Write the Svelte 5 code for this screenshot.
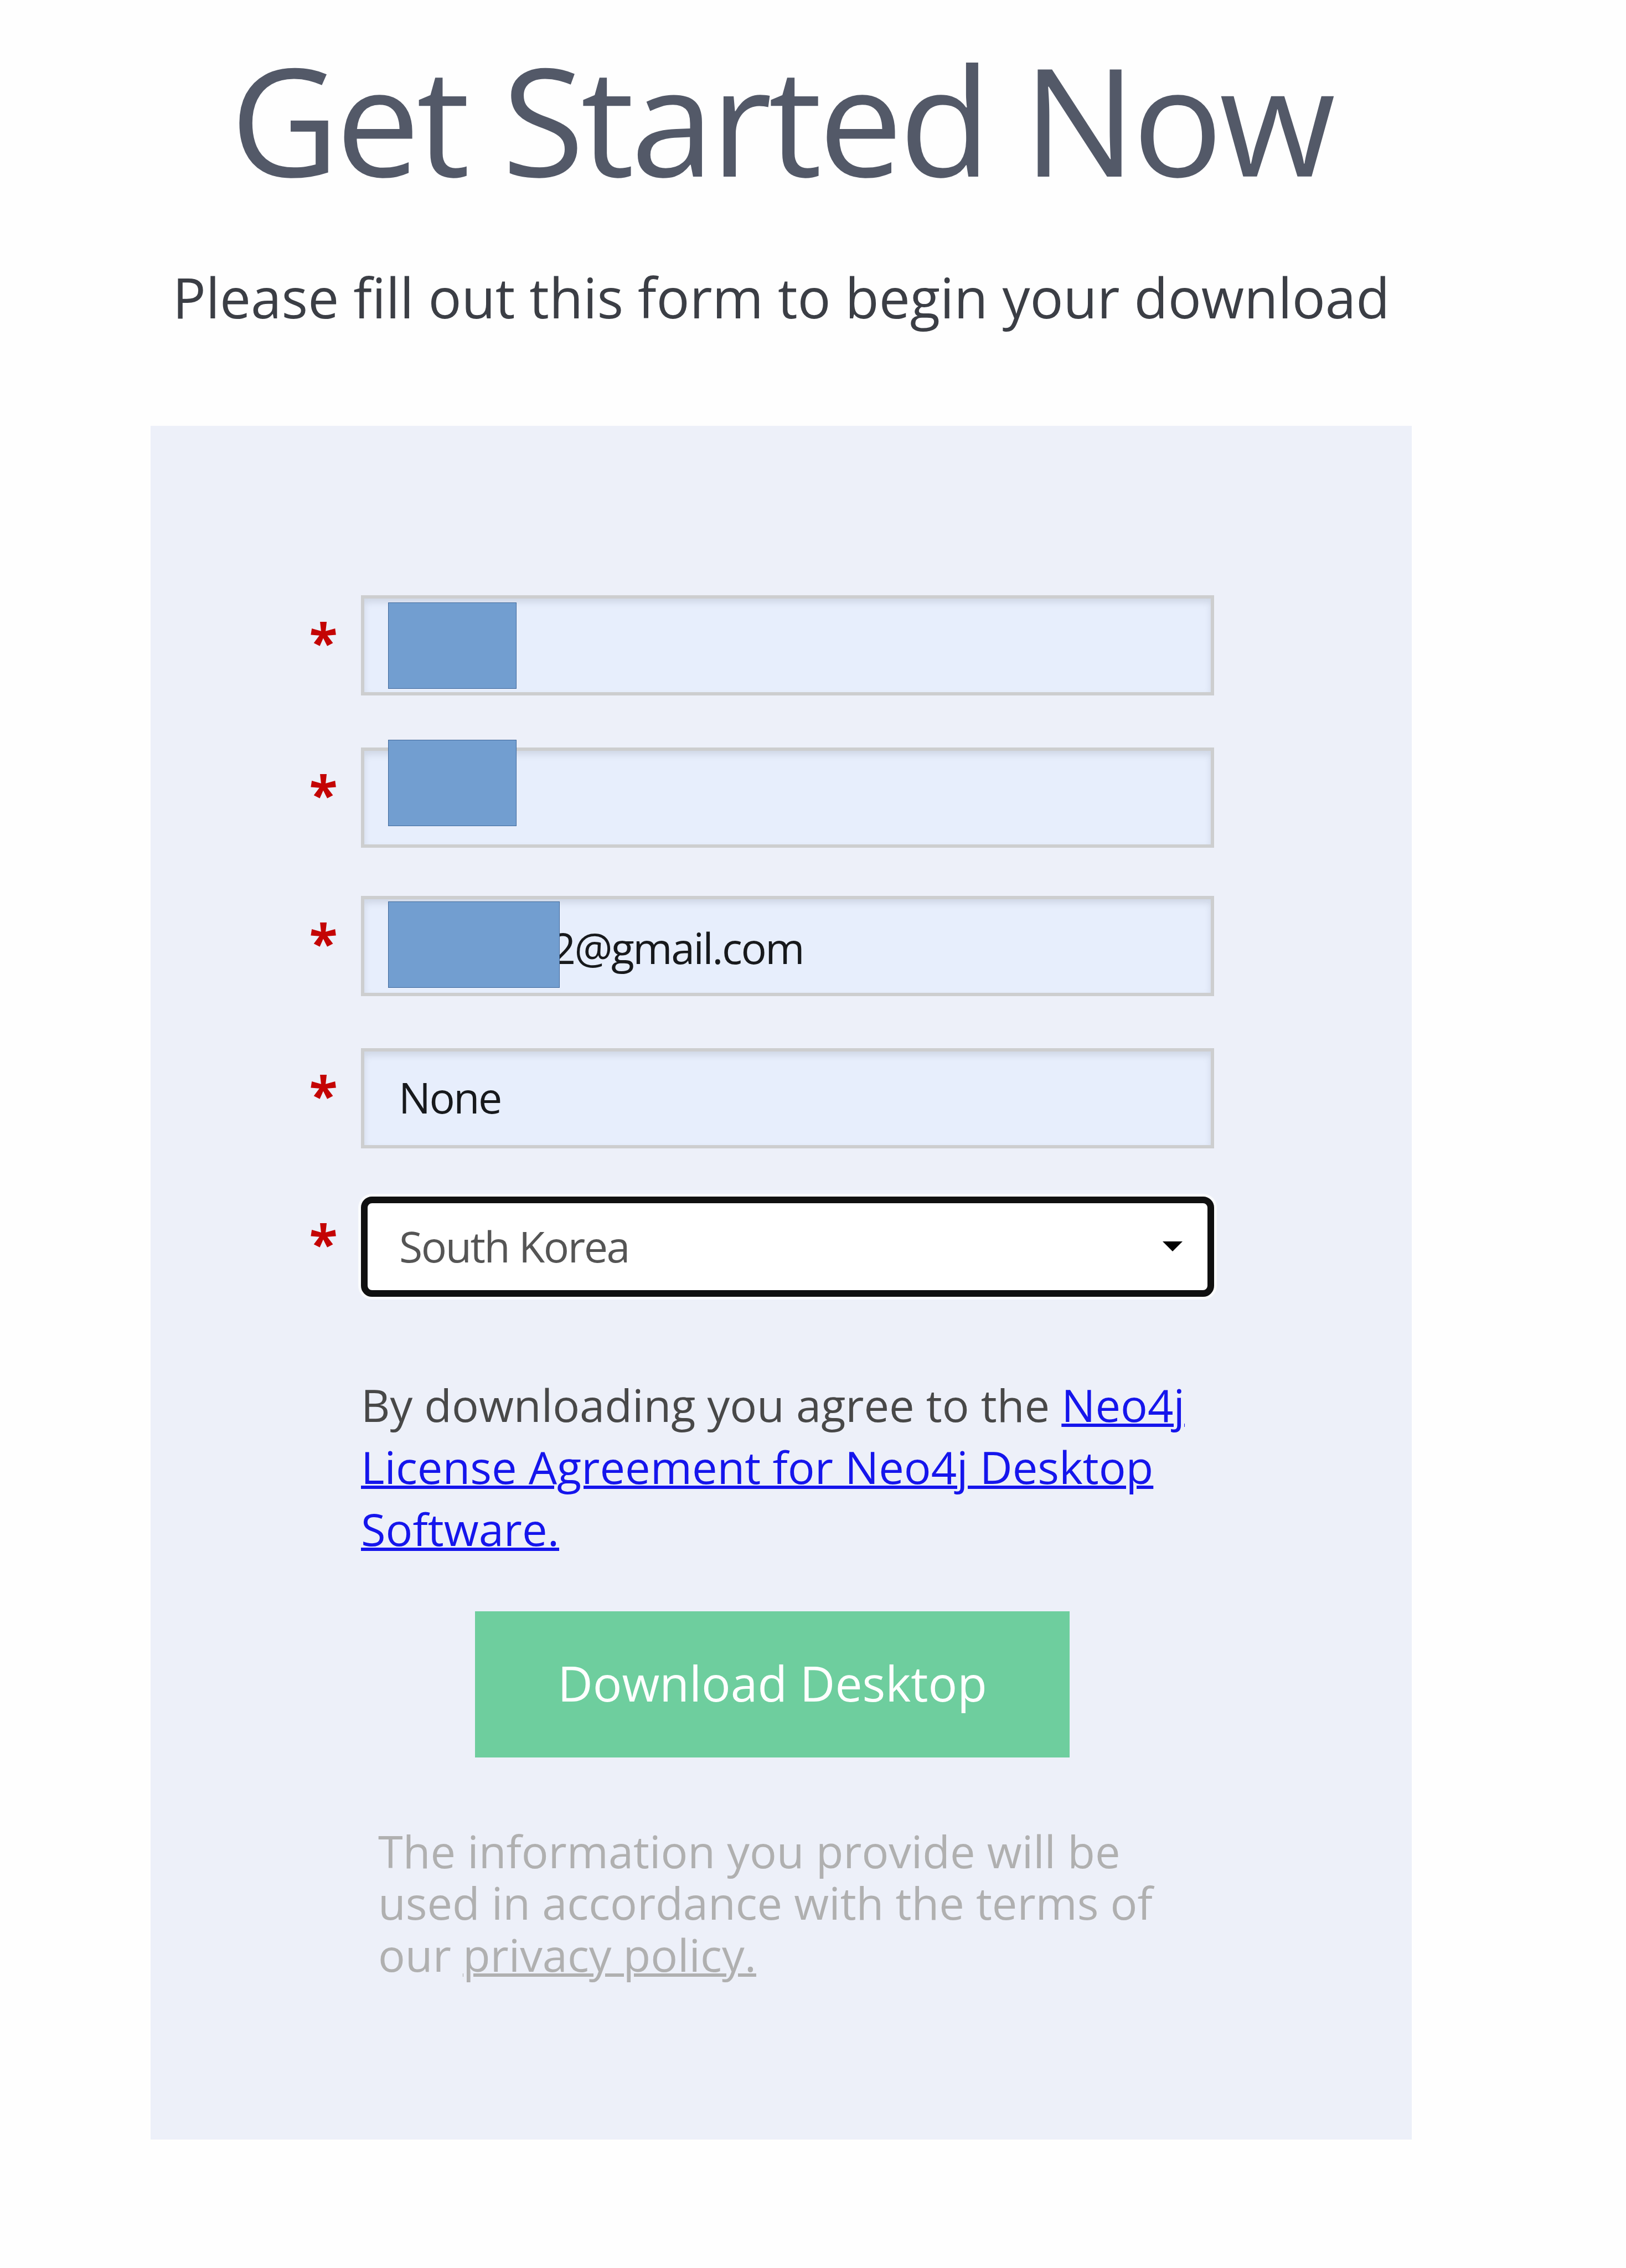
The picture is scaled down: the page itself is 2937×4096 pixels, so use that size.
<script>
  let fields = [
    { name: 'firstName', value: '', mask: 'first' },
    { name: 'lastName', value: '', mask: 'last' },
    { name: 'email', value: '2@gmail.com', mask: 'mail' },
    { name: 'company', value: 'None', mask: null },
  ]

  let country = 'South Korea'

  function handleSubmit(e){
    e.preventDefault()
  }
</script>

<main>
  <h1>Get Started Now</h1>
  <p class="subtitle">Please fill out this form to begin your download</p>

  <form class="card" on:submit={handleSubmit}>
    {#each fields as field}
      <div class="row">
        <span class="required">*</span>
        <div class="control">
          <input
          class={field.name}
          type="text"
          name={field.name}
          bind:value={field.value}/>
          {#if field.mask}
            <div class="mask {field.mask}"></div>
          {/if}
        </div>
      </div>
    {/each}

    <div class="row">
      <span class="required">*</span>
      <div class="control select">
        <span>{country}</span>
        <svg width="36" height="18" viewBox="0 0 36 18"><path d="M0 0H36L18 18Z" /></svg>
      </div>
    </div>

    <p class="agree">
      By downloading you agree to the <a href="#license">Neo4j<br />
      License Agreement for Neo4j Desktop<br />
      Software.</a>
    </p>

    <button type="submit">Download Desktop</button>

    <p class="info">
      The information you provide will be<br />
      used in accordance with the terms of<br />
      our <a href="#privacy">privacy policy.</a>
    </p>
  </form>
</main>

<style>
  :global(body){
    background: #fefefe;
  }

  main{
    box-sizing: border-box;
    width: 2937px;
    height: 4096px;
    padding: 64px 387px 0 272px;
    overflow: hidden;
    background: #fefefe;
    font-family: "Open Sans", "Noto Sans", sans-serif;
  }

  h1{
    margin: 0;
    font-size: 271px;
    font-weight: 400;
    line-height: 300px;
    letter-spacing: -6.3px;
    text-align: center;
    white-space: nowrap;
    color: #535968;
  }

  .subtitle{
    margin: 102px 0 163px;
    font-size: 99.9px;
    line-height: 140px;
    text-align: center;
    white-space: nowrap;
    color: #3b3e45;
  }

  .card{
    box-sizing: border-box;
    height: 3095px;
    padding: 306px 0 0 244px;
    background: #edf0f9;
  }

  .row{
    display: flex;
    height: 181px;
    margin-bottom: 93.5px;
  }

  .row:nth-child(even){
    margin-bottom: 87.5px;
  }

  .required{
    width: 136px;
    font-size: 94px;
    font-weight: 700;
    line-height: 167px;
    text-align: center;
    color: #c40404;
  }

  .control{
    position: relative;
    width: 1541px;
  }

  input{
    box-sizing: border-box;
    display: block;
    width: 100%;
    height: 100%;
    padding: 0 0 3px 62px;
    border: 6px solid #cdcecf;
    border-radius: 0;
    outline: none;
    background: #e7eefc;
    box-shadow: inset 0 7px 12px rgba(90, 100, 120, 0.16);
    font-family: inherit;
    font-size: 77px;
    letter-spacing: -2.5px;
    color: #17191c;
  }

  .email{
    padding: 6px 0 0 338px;
  }

  /* blocks that hide the personal data */
  .mask{
    position: absolute;
    box-sizing: border-box;
    left: 49px;
    width: 232px;
    height: 156px;
    border: 1px solid #41699c;
    background: #729ed0;
  }

  .first{
    top: 13px;
  }

  .last{
    top: -14px;
  }

  .mail{
    top: 10px;
    width: 310px;
  }

  .select{
    box-sizing: border-box;
    display: flex;
    align-items: center;
    justify-content: space-between;
    padding: 0 45px 2px 57px;
    border: 12px solid #101010;
    border-radius: 20px;
    background: #fff;
    box-shadow: 0 0 0 5px #fafbfd;
    font-size: 77px;
    letter-spacing: -2.4px;
    line-height: 100px;
    color: #555;
  }

  .agree{
    margin: 0;
    padding: 45px 0 0 136px;
    font-size: 81.25px;
    line-height: 112px;
    white-space: nowrap;
    color: #484848;
  }

  .agree a{
    color: #1515ec;
    text-decoration-thickness: 6px;
  }

  button{
    display: block;
    width: 1074px;
    height: 264px;
    margin: 93px 0 0 342px;
    padding: 0 0 5px;
    border: none;
    background: #6ece9e;
    font-family: inherit;
    font-size: 87.6px;
    color: #fff;
  }

  .info{
    margin: 0;
    padding: 122px 0 0 167px;
    font-size: 81.2px;
    line-height: 93.5px;
    white-space: nowrap;
    color: #b0b0b0;
  }

  .info a{
    color: inherit;
    text-decoration-thickness: 6px;
  }
</style>
